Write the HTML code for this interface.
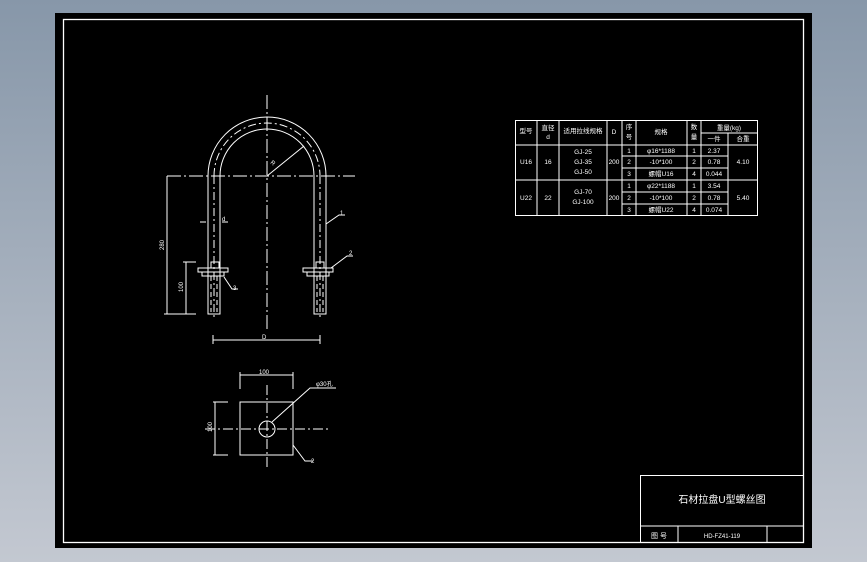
<!DOCTYPE html>
<html><head><meta charset="utf-8"><style>
html,body{margin:0;padding:0;width:867px;height:562px;overflow:hidden;background:linear-gradient(#8797a9,#c3c8d1);}
svg{position:absolute;left:0;top:0}
text{font-family:"Liberation Sans","Noto Sans CJK SC",sans-serif;fill:#fff}
</style></head><body>
<svg width="867" height="562" viewBox="0 0 867 562">
<rect x="55" y="13" width="757" height="535" fill="#000"/>
<rect x="63.5" y="19.5" width="740" height="523" fill="none" stroke="#fff" stroke-width="1.3"/>
<g stroke="#fff" fill="none" stroke-width="1">
<!-- centerlines -->
<line x1="267" y1="95" x2="267" y2="330" stroke-dasharray="14,3,2,3"/>
<line x1="167" y1="176" x2="355" y2="176" stroke-dasharray="14,3,2,3"/>
<line x1="214" y1="176" x2="214" y2="318" stroke-dasharray="8,3,2,3"/>
<line x1="320" y1="176" x2="320" y2="318" stroke-dasharray="8,3,2,3"/>
<!-- U bolt -->
<path d="M208 314 V176 A59 59 0 0 1 326 176 V314 H314 V176 A47 47 0 0 0 220 176 V314 Z"/>
<path d="M214 176 A53 53 0 0 1 320 176" stroke-dasharray="8,3,2,3"/>
<line x1="267" y1="176" x2="304" y2="146"/>
<!-- washers left -->
<rect x="198" y="268" width="30" height="4"/><rect x="202" y="272" width="22" height="4"/>
<rect x="211" y="262" width="8" height="6"/>
<rect x="303" y="268" width="30" height="4"/><rect x="307" y="272" width="22" height="4"/>
<rect x="316" y="262" width="8" height="6"/>
<line x1="211" y1="276" x2="211" y2="312" stroke-dasharray="5,3"/><line x1="217" y1="276" x2="217" y2="312" stroke-dasharray="5,3"/>
<line x1="317" y1="276" x2="317" y2="312" stroke-dasharray="5,3"/><line x1="323" y1="276" x2="323" y2="312" stroke-dasharray="5,3"/>
<!-- leaders -->
<polyline points="326,224 339,215 345,215"/>
<polyline points="331,268 347,256 353,256"/>
<polyline points="224,277 232,289 238,289"/>
<!-- dims -->
<line x1="167" y1="176" x2="167" y2="314"/><line x1="164" y1="314" x2="196" y2="314"/>
<line x1="186" y1="262" x2="186" y2="314"/><line x1="183" y1="262" x2="196" y2="262"/>
<line x1="200" y1="222" x2="206" y2="222"/><line x1="222" y1="222" x2="228" y2="222"/>
<line x1="213" y1="340" x2="320" y2="340"/><line x1="213" y1="335" x2="213" y2="344"/><line x1="320" y1="335" x2="320" y2="344"/>
<!-- plate -->
<rect x="240" y="402" width="53" height="53"/>
<circle cx="267" cy="429" r="8"/>
<line x1="267" y1="385" x2="267" y2="470" stroke-dasharray="10,3,2,3"/>
<line x1="205" y1="429" x2="328" y2="429" stroke-dasharray="10,3,2,3"/>
<line x1="240" y1="375" x2="293" y2="375"/><line x1="240" y1="372" x2="240" y2="389"/><line x1="293" y1="372" x2="293" y2="389"/>
<line x1="215" y1="402" x2="215" y2="455"/><line x1="213" y1="402" x2="228" y2="402"/><line x1="213" y1="455" x2="228" y2="455"/>
<polyline points="272,422 310,388 336,388"/>
<polyline points="293,445 305,461 313,461"/>
<!-- table -->
<rect x="515.5" y="120.5" width="242" height="95"/>
<line x1="537" y1="120" x2="537" y2="215"/><line x1="559" y1="120" x2="559" y2="215"/>
<line x1="607" y1="120" x2="607" y2="215"/><line x1="622" y1="120" x2="622" y2="215"/>
<line x1="636" y1="120" x2="636" y2="215"/><line x1="687" y1="120" x2="687" y2="215"/>
<line x1="701" y1="120" x2="701" y2="215"/><line x1="728" y1="133" x2="728" y2="215"/>
<line x1="701" y1="133" x2="758" y2="133"/>
<line x1="515" y1="145" x2="758" y2="145"/><line x1="515" y1="180" x2="758" y2="180"/>
<line x1="622" y1="156" x2="728" y2="156"/><line x1="622" y1="168" x2="728" y2="168"/>
<line x1="622" y1="192" x2="728" y2="192"/><line x1="622" y1="204" x2="728" y2="204"/>
<!-- title block -->
<rect x="640.5" y="475.5" width="163" height="67"/>
<line x1="640" y1="526" x2="804" y2="526"/><line x1="678" y1="526" x2="678" y2="543"/><line x1="767" y1="526" x2="767" y2="543"/>
</g>
<g font-size="6">
<text x="270" y="163" transform="rotate(40 270 163)">R</text>
<text x="222" y="221">d</text>
<text x="340" y="215">1</text><text x="349" y="255">2</text><text x="233" y="290">3</text>
<text x="164" y="250" transform="rotate(-90 164 250)">280</text>
<text x="183" y="292" transform="rotate(-90 183 292)">100</text>
<text x="262" y="339">D</text>
<text x="259" y="374">100</text>
<text x="316" y="386">φ30孔</text>
<text x="311" y="463">2</text>
<text x="212" y="432" transform="rotate(-90 212 432)">100</text>
</g>
<g font-size="6.5" text-anchor="middle">
<text x="526" y="133">型号</text><text x="548" y="130">直径</text><text x="548" y="139">d</text>
<text x="583" y="133">适用拉线规格</text><text x="614" y="134">D</text>
<text x="629" y="129">序</text><text x="629" y="139">号</text><text x="661" y="134">规格</text>
<text x="694" y="129">数</text><text x="694" y="139">量</text>
<text x="729" y="130">重量(kg)</text><text x="714" y="141">一件</text><text x="743" y="141">合重</text>
<text x="526" y="164">U16</text><text x="548" y="164">16</text>
<text x="583" y="154">GJ-25</text><text x="583" y="164">GJ-35</text><text x="583" y="174">GJ-50</text>
<text x="614" y="164">200</text>
<text x="629" y="153">1</text><text x="629" y="164">2</text><text x="629" y="176">3</text>
<text x="661" y="153">φ16*1188</text><text x="661" y="164">-10*100</text><text x="661" y="176">螺帽U16</text>
<text x="694" y="153">1</text><text x="694" y="164">2</text><text x="694" y="176">4</text>
<text x="714" y="153">2.37</text><text x="714" y="164">0.78</text><text x="714" y="176">0.044</text>
<text x="743" y="164">4.10</text>
<text x="526" y="200">U22</text><text x="548" y="200">22</text>
<text x="583" y="194">GJ-70</text><text x="583" y="204">GJ-100</text>
<text x="614" y="200">200</text>
<text x="629" y="188">1</text><text x="629" y="200">2</text><text x="629" y="212">3</text>
<text x="661" y="188">φ22*1188</text><text x="661" y="200">-10*100</text><text x="661" y="212">螺帽U22</text>
<text x="694" y="188">1</text><text x="694" y="200">2</text><text x="694" y="212">4</text>
<text x="714" y="188">3.54</text><text x="714" y="200">0.78</text><text x="714" y="212">0.074</text>
<text x="743" y="200">5.40</text>
</g>
<text x="722" y="503" font-size="10" text-anchor="middle">石材拉盘U型螺丝图</text>
<text x="659" y="538" font-size="7" text-anchor="middle">图 号</text>
<text x="722" y="538" font-size="6" text-anchor="middle">HD-FZ41-119</text>
</svg>
</body></html>
